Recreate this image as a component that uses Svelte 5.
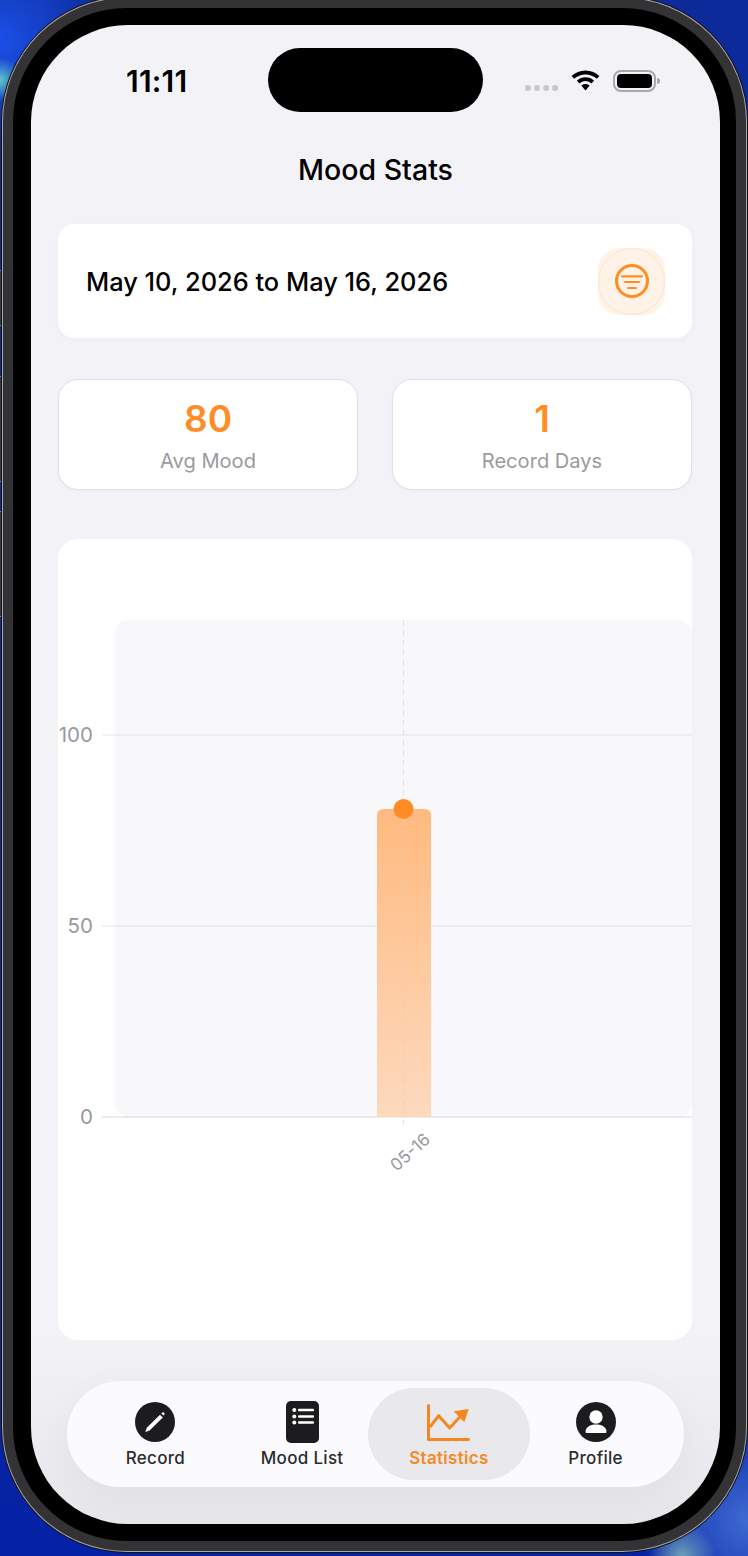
<script>
	const stats = [
		{ value: '80', label: 'Avg Mood' },
		{ value: '1', label: 'Record Days' }
	];
	const tabs = [
		{ id: 'record', label: 'Record' },
		{ id: 'list', label: 'Mood List' },
		{ id: 'stats', label: 'Statistics' },
		{ id: 'profile', label: 'Profile' }
	];
	let active = $state('stats');
	const ticks = [
		{ label: '100', y: 196 },
		{ label: '50', y: 387 },
		{ label: '0', y: 578 }
	];
</script>

<div class="desk">
	<div class="side-btn b1"></div>
	<div class="side-btn b2"></div>
	<div class="side-btn b3"></div>

	<div class="phone">
		<div class="screen">
			<div class="island"></div>

			<div class="status">
				<span class="time">11:11</span>
				<div class="status-icons">
					<div class="signal"><i></i><i></i><i></i><i></i></div>
					<svg class="wifi" width="29" height="21" viewBox="0 0 29 21">
						<path d="M14.5 0.5C9 0.5 4.2 2.6 0.6 6l2.6 2.8C6.2 6 10.1 4.4 14.5 4.4S22.8 6 25.8 8.8L28.4 6C24.8 2.6 20 0.5 14.5 0.5Z" fill="#000" />
						<path d="M14.5 7.2c-3.3 0-6.3 1.2-8.6 3.4l2.6 2.8c1.6-1.5 3.7-2.4 6-2.4s4.4 0.9 6 2.4l2.6-2.8c-2.3-2.2-5.3-3.4-8.6-3.4Z" fill="#000" />
						<path d="M14.5 14c-1.6 0-3 0.6-4.1 1.6l4.1 5 4.1-5c-1.1-1-2.5-1.6-4.1-1.6Z" fill="#000" />
					</svg>
					<div class="battery"><div class="level"></div></div>
				</div>
			</div>

			<h1 class="title">Mood Stats</h1>

			<div class="content">
				<div class="date-card">
					<span class="date-text">May 10, 2026 to May 16, 2026</span>
					<button class="filter-btn" aria-label="Filter">
						<svg width="36" height="36" viewBox="0 0 36 36" fill="none" stroke="#ff8c24" stroke-linecap="round">
							<circle cx="18" cy="18" r="15.500" stroke-width="3" />
							<path d="M8 13.300h20M11 19h14M14 25h8" stroke-width="2.200" />
						</svg>
					</button>
				</div>

				<div class="stats-row">
					{#each stats as stat}
					<div class="stat-card">
						<div class="stat-value">{stat.value}</div>
						<div class="stat-label">{stat.label}</div>
					</div>
					{/each}
				</div>

				<div class="chart-card">
					<svg class="chart" width="634" height="801" viewBox="0 0 634 801">
						<defs>
							<linearGradient id="barFill" x1="0" y1="0" x2="0" y2="1">
								<stop offset="0" stop-color="#ffba7f" />
								<stop offset="1" stop-color="#fdd9bd" />
							</linearGradient>
						</defs>
						<rect x="57" y="81" width="577" height="497" rx="14" fill="#f8f8fb" />
						{#each ticks as tick}
						<line x1="44" x2="634" y1={tick.y} y2={tick.y} stroke={tick.y === 578 ? '#d8d8dc' : '#e3e3e7'} stroke-width="1" />
						<text class="tick" x="35" y={tick.y + 7} text-anchor="end">{tick.label}</text>
						{/each}
						<path d="M319 276a6 6 0 0 1 6-6h42a6 6 0 0 1 6 6v302h-54Z" fill="url(#barFill)" />
						<line x1="345.500" x2="345.500" y1="81" y2="585" stroke="#d0d0d6" stroke-opacity="0.6" stroke-dasharray="5 5" />
						<circle cx="345.500" cy="270" r="10" fill="#ff8c24" />
						<text class="tick small" x="352" y="619" text-anchor="middle" transform="rotate(-42 352 613)">05-16</text>
					</svg>
				</div>
			</div>

			<nav class="tabbar">
				{#each tabs as tab}
				<button class="tab" class:active={active === tab.id} onclick={() => (active = tab.id)}>
					<span class="tab-icon">
						{#if tab.id === 'record'}
						<svg width="40" height="40" viewBox="0 0 40 40">
							<circle cx="20" cy="20" r="20" fill="#1c1c1e" />
							<path d="M10.300 30l1.500-4.300L25 12.800l2.800 2.800L14.600 28.500Z" fill="#fff" />
							<path d="M26.300 11.500l0.800-0.800a1.500 1.500 0 0 1 2.100 0a1.500 1.500 0 0 1 0 2.100l-0.800 0.800Z" fill="#fff" />
						</svg>
						{:else if tab.id === 'list'}
						<svg width="33" height="42" viewBox="0 0 33 42">
							<rect width="33" height="42" rx="5" fill="#1c1c1e" />
							<g fill="#fff">
								<circle cx="8.300" cy="9" r="2" />
								<circle cx="8.300" cy="15.500" r="2" />
								<circle cx="8.300" cy="21.500" r="2" />
								<rect x="12" y="7.800" width="16" height="2.400" rx="1" />
								<rect x="12" y="14.300" width="16" height="2.400" rx="1" />
								<rect x="12" y="20.300" width="16" height="2.400" rx="1" />
							</g>
						</svg>
						{:else if tab.id === 'stats'}
						<svg width="43" height="37" viewBox="0 0 43 37" fill="none">
							<path d="M1.500 1.500V35.500H41.500" stroke="#f5871f" stroke-width="3" stroke-linecap="round" stroke-linejoin="round" />
							<path d="M3 23L11.700 11.700L22.700 24L34 11.700" stroke="#f5871f" stroke-width="3" stroke-linejoin="round" />
							<path d="M26.700 7.300L41.700 5L37.300 18.300Z" fill="#f5871f" />
						</svg>
						{:else}
						<svg width="40" height="40" viewBox="0 0 40 40">
							<circle cx="20" cy="20" r="20" fill="#1c1c1e" />
							<circle cx="20" cy="15" r="6.700" fill="#fff" />
							<path d="M9.500 30c0-5 4.500-7.500 10.500-7.500s10.500 2.500 10.500 7.500a1 1 0 0 1-1 1h-19a1 1 0 0 1-1-1Z" fill="#fff" />
						</svg>
						{/if}
					</span>
					<span class="tab-label">{tab.label}</span>
				</button>
				{/each}
			</nav>
		</div>
	</div>
</div>

<style>
	:global(body) { margin: 0; background: #0a2aa8; }
	.desk {
		position: relative; width: 748px; height: 1556px; overflow: hidden; font-family: Inter, "Liberation Sans", sans-serif;
		background:
			radial-gradient(circle 22px at 0 80px, #5fc6c9, transparent),
			radial-gradient(circle 34px at 682px 1556px, #6fa0b8, transparent),
			radial-gradient(circle 110px at 748px 1520px, #3f6ad2, transparent),
			radial-gradient(circle 110px at 0 40px, #1b4fe6, transparent),
			linear-gradient(#0c2a9a, #0c2a9a 200px, #0a2aa8 900px, #0622a4);
	}
	.side-btn { position: absolute; left: 0; width: 5px; background: #3a3a3c; border-top: 1px solid #8a8a8e; border-bottom: 1px solid #8a8a8e; box-sizing: border-box; }
	.b1 { top: 270px; height: 56px; }
	.b2 { top: 376px; height: 106px; }
	.b3 { top: 511px; height: 106px; }

	.phone {
		position: relative; box-sizing: border-box; width: 743px; height: 1553px; margin-left: 3px; top: -2px;
		background: #000; border: 10px solid #333335; border-radius: 124px;
		box-shadow: 0 0 0 1px #a9a9ad, 0 0 0 2px #111;
		padding: 17px 16px 17px 18px;
	}
	.screen {
		position: relative; height: 100%; overflow: hidden; border-radius: 97px;
		background: linear-gradient(#f2f2f7 0, #f2f2f7 1310px, #e6e6ea 100%);
		display: flex; flex-direction: column;
	}
	.island { position: absolute; left: 237px; top: 23px; width: 215px; height: 64px; border-radius: 32px; background: #000; }

	.status { height: 112px; flex-shrink: 0; position: relative; }
	.time { position: absolute; left: 95px; top: 38px; font-size: 30px; line-height: 36px; font-weight: 600; color: #000; letter-spacing: 0.2px; }
	.status-icons { position: absolute; left: 494px; top: 45px; display: flex; align-items: flex-start; }
	.signal { display: flex; gap: 3px; margin-top: 15px; }
	.signal i { width: 6px; height: 6px; border-radius: 50%; background: #c7c7cc; }
	.wifi { margin-left: 13px; }
	.battery { position: relative; box-sizing: border-box; width: 43px; height: 22px; margin-left: 13px; border: 2px solid #a8a8ac; border-radius: 8px; padding: 2px; }
	.battery::after { content: ''; position: absolute; right: -6px; top: 6px; width: 3px; height: 6px; border-radius: 0 3px 3px 0; background: #a8a8ac; }
	.level { height: 100%; background: #000; border-radius: 4px; }

	.title { margin: 0; height: 66px; line-height: 66px; text-align: center; font-size: 28.500px; font-weight: 500; color: #000; flex-shrink: 0; }

	.content { padding: 21px 28px 0 27px; flex-shrink: 0; }
	.date-card { box-sizing: border-box; height: 114px; display: flex; align-items: center; justify-content: space-between; padding: 0 27px 0 28px; background: #fff; border-radius: 16px; box-shadow: 0 2px 8px rgba(0,0,0,0.02); }
	.date-text { font-size: 25.400px; font-weight: 500; color: #000; }
	.filter-btn { position: relative; width: 67px; height: 67px; padding: 0; display: flex; align-items: center; justify-content: center; background: #fff2e7; border: none; border-radius: 22px; }
	.filter-btn::before { content: ''; position: absolute; inset: 0; border: 1px solid #ffe3cc; border-radius: 50%; }

	.stats-row { display: flex; gap: 34px; margin-top: 41px; }
	.stat-card { flex: 1; box-sizing: border-box; height: 111px; display: flex; flex-direction: column; align-items: center; padding-top: 19px; background: #fff; border: 1px solid #e0e0e5; border-radius: 20px; box-shadow: 0 1px 3px rgba(0,0,0,0.03); }
	.stat-value { font-size: 37px; line-height: 40px; font-weight: 600; color: #ff8c24; }
	.stat-label { margin-top: 9px; font-size: 20.100px; line-height: 26px; color: #9a9a9e; }

	.chart-card { margin-top: 49px; height: 801px; background: #fff; border-radius: 20px; overflow: hidden; }
	.chart { display: block; }
	.tick { font-family: Inter, "Liberation Sans", sans-serif; font-size: 20.500px; fill: #98989c; }
	.small { font-size: 17px; }

	.tabbar {
		position: absolute; left: 36px; right: 36px; top: 1356px; box-sizing: border-box; height: 106px; display: flex; padding: 7px 15px;
		background: #fbfbfe; border-radius: 53px; box-shadow: 0 6px 32px rgba(0,0,0,0.04);
	}
	.tab { position: relative; flex: 1; display: flex; flex-direction: column; align-items: center; padding: 0; background: none; border: none; color: #1c1c1e; font-family: inherit; }
	.tab.active::before { content: ''; position: absolute; left: -8px; right: -8px; top: 0; bottom: 0; border-radius: 46px; background: #e8e8ed; }
	.tab-icon { position: relative; height: 42px; margin-top: 13px; display: flex; align-items: center; justify-content: center; }
	.tab-label { position: relative; margin-top: 4px; font-size: 17px; line-height: 22px; font-weight: 500; letter-spacing: 0.3px; color: #2c2c2e; }
	.tab.active .tab-label { color: #f58a26; font-weight: 600; }
</style>
